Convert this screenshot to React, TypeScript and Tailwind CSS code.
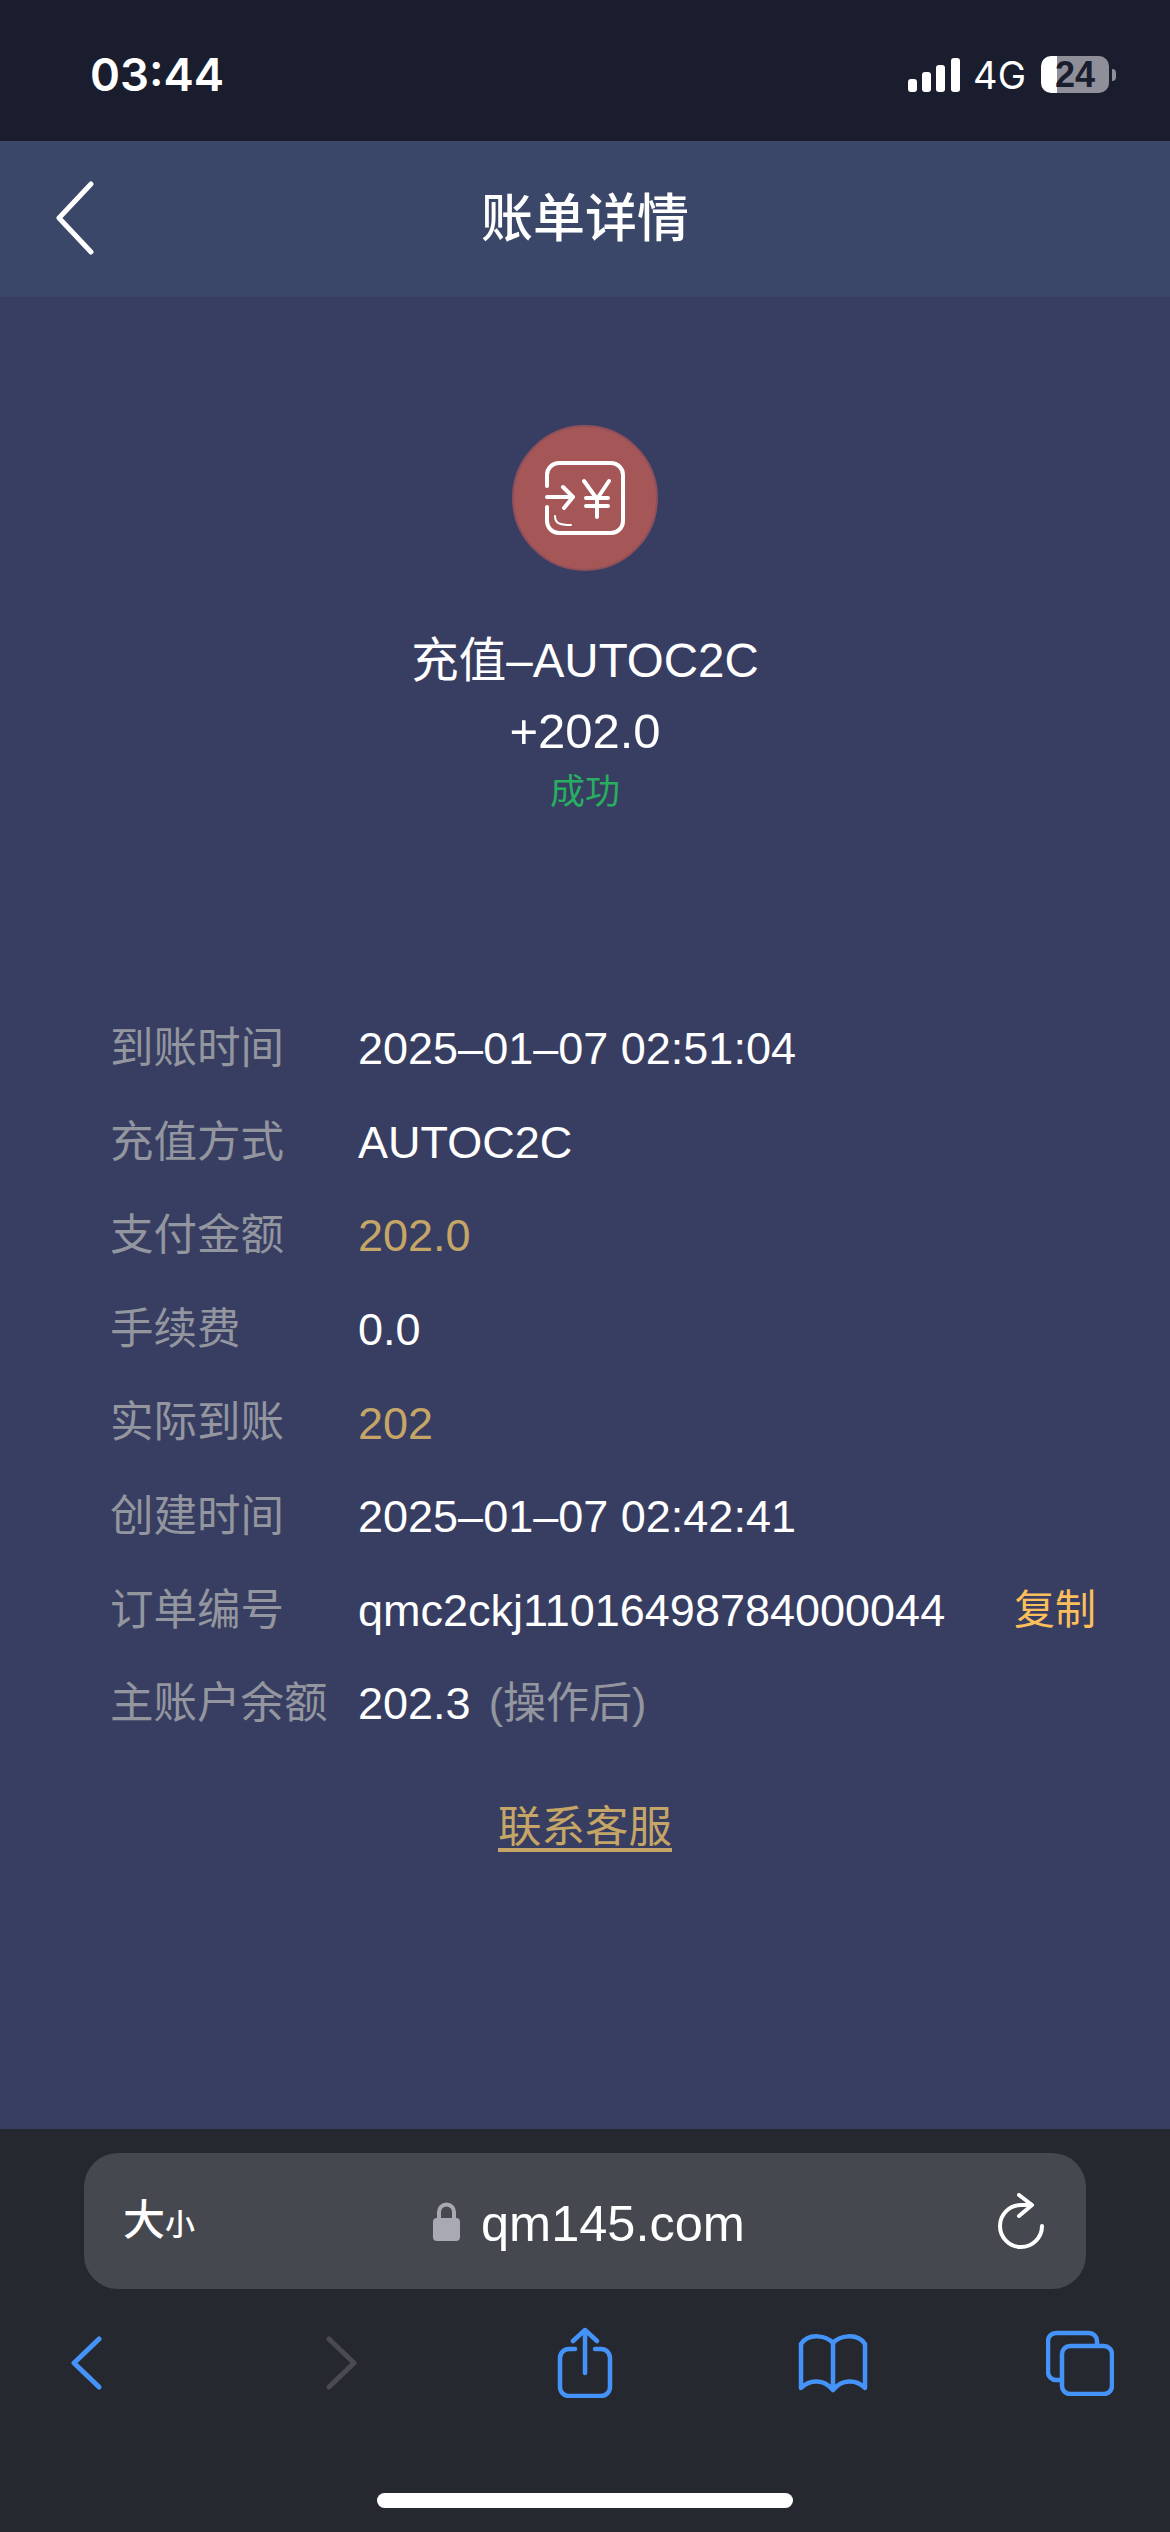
const fontStack = { fontFamily: '"Liberation Sans", "Noto Sans CJK SC", sans-serif' };

const rows = [
  { label: '到账时间', value: '2025–01–07 02:51:04' },
  { label: '充值方式', value: 'AUTOC2C' },
  { label: '支付金额', value: '202.0', gold: true },
  { label: '手续费', value: '0.0' },
  { label: '实际到账', value: '202', gold: true },
  { label: '创建时间', value: '2025–01–07 02:42:41' },
  { label: '订单编号', value: 'qmc2ckj11016498784000044', copy: true },
  { label: '主账户余额', value: '202.3', note: '(操作后)' },
];

function SignalBars() {
  return (
    <svg width="52" height="34" viewBox="0 0 52 34" fill="#fff">
      <rect x="0" y="21" width="9" height="13" rx="3" />
      <rect x="14" y="14" width="9" height="20" rx="3" />
      <rect x="28" y="7" width="9" height="27" rx="3" />
      <rect x="43" y="0" width="9" height="34" rx="3" />
    </svg>
  );
}

function RechargeIcon() {
  return (
    <svg width="80" height="74" viewBox="0 0 80 74" fill="none" stroke="#fff" strokeWidth="4" strokeLinecap="round" strokeLinejoin="round">
      <path d="M2 25V14A12 12 0 0 1 14 2H66A12 12 0 0 1 78 14V60A12 12 0 0 1 66 72H14A12 12 0 0 1 2 60V46" />
      <path d="M2 36H27M18 26L28 36L19 47" />
      <path d="M10 55C10 62 14 64 26 64" strokeWidth="2" />
      <path d="M39 20L52 38L64 20M52 38V56M41 37H63M41 45H63" />
    </svg>
  );
}

export default function App() {
  return (
    <div className="flex h-[2532px] w-[1170px] flex-col overflow-hidden bg-[#383e62] text-white" style={fontStack}>
      {/* Status bar */}
      <div className="flex h-[141px] shrink-0 items-center bg-[#191d2e] pl-[90px] pr-[54px] pt-[8px]">
        <span className="text-[45.5px] font-semibold leading-none" style={{ fontFamily: 'Inter, sans-serif' }}>03:44</span>
        <div className="ml-auto flex items-center">
          <SignalBars />
          <span className="ml-[13px] text-[38px] leading-none" style={{ fontFamily: 'Inter, sans-serif' }}>4G</span>
          <div className="ml-[15px] flex h-[37px] w-[68px] items-center justify-center rounded-[10px] bg-[linear-gradient(90deg,#fff_24%,#8e8f99_24%)] text-[36px] font-bold leading-none text-[#191d2e]">
            24
          </div>
          <div className="ml-[3px] h-[12px] w-[4px] rounded-r-full bg-[#8e8f99]" />
        </div>
      </div>

      {/* Header */}
      <div className="relative flex h-[156px] shrink-0 items-center justify-center bg-[#3b4769]">
        <svg className="absolute left-[55px] top-[40px]" width="40" height="74" viewBox="0 0 40 74" fill="none" stroke="#fff" strokeWidth="5" strokeLinecap="round" strokeLinejoin="round">
          <path d="M36 3L4 37L36 71" />
        </svg>
        <h1 className="text-[52px] font-medium leading-none">账单详情</h1>
      </div>

      {/* Content */}
      <main className="flex min-h-0 flex-1 flex-col items-center">
        <div className="mt-[128px] flex h-[146px] w-[146px] items-center justify-center rounded-full border-2 border-[#8e4f5c] bg-[#a55656]">
          <RechargeIcon />
        </div>
        <p className="mt-[55px] text-[47.5px] leading-[70px]">充值–AUTOC2C</p>
        <p className="text-[49px] leading-[71px]">+202.0</p>
        <p className="text-[35px] leading-[50px] text-[#27ae60]">成功</p>

        <div className="mt-[185px] flex w-full flex-col pl-[110px] pr-[74px]">
          {rows.map((row) => (
            <div key={row.label} className="flex h-[93.6px] items-center text-[45px] leading-none">
              <span className="w-[248px] shrink-0 text-[43.5px] text-[#93969f]">{row.label}</span>
              <span className={row.gold ? 'text-[#c6a666]' : 'text-white'}>{row.value}</span>
              {row.note && <span className="ml-[18px] text-[43px] text-[#93969f]">{row.note}</span>}
              {row.copy && <span className="ml-auto text-[41px] text-[#fdbe5c]">复制</span>}
            </div>
          ))}
        </div>

        <a className="mt-[46px] text-[43.5px] leading-[60px] text-[#c6a666] underline underline-offset-[6px]">联系客服</a>
      </main>

      {/* Safari toolbar */}
      <div className="flex h-[403px] shrink-0 flex-col bg-[#26282f]">
        <div className="mx-[84px] mt-[24px] flex h-[136px] items-center rounded-[34px] bg-[#46484f] pl-[39px] pr-[42px]">
          <span className="flex w-[310px] items-baseline font-medium leading-none">
            <span className="text-[42px]">大</span>
            <span className="text-[30px]">小</span>
          </span>
          <svg width="27" height="39" viewBox="0 0 27 39" fill="none">
            <path d="M6 18V10A7.5 7.5 0 0 1 21 10V18" stroke="#a9a9b3" strokeWidth="4" />
            <rect x="0" y="16" width="27" height="23" rx="4" fill="#a9a9b3" />
          </svg>
          <span className="ml-[21px] pt-[6px] text-[50.5px] leading-none">qm145.com</span>
          <svg className="ml-auto" width="46" height="56" viewBox="0 0 46 56" fill="none" stroke="#fff" strokeWidth="4" strokeLinecap="round" strokeLinejoin="round">
            <path d="M33 12H23A21 21 0 1 0 44 33" />
            <path d="M21 2L34 12L21 23" />
          </svg>
        </div>

        <div className="mt-[38px] flex items-center pl-[71px]">
          <svg width="31" height="54" viewBox="0 0 31 54" fill="none" stroke="#4493f8" strokeWidth="5" strokeLinecap="round" strokeLinejoin="round">
            <path d="M28 3L3 27L28 51" />
          </svg>
          <svg className="ml-[224px]" width="31" height="54" viewBox="0 0 31 54" fill="none" stroke="#4a4b50" strokeWidth="5" strokeLinecap="round" strokeLinejoin="round">
            <path d="M3 3L28 27L3 51" />
          </svg>
          <svg className="ml-[200px]" width="56" height="71" viewBox="0 0 56 71" fill="none" stroke="#4493f8" strokeWidth="4.5" strokeLinecap="round" strokeLinejoin="round">
            <path d="M28 3V46M16 14L28 3L40 14" />
            <path d="M18 22H12A9 9 0 0 0 3 31V60A9 9 0 0 0 12 69H44A9 9 0 0 0 53 60V31A9 9 0 0 0 44 22H38" />
          </svg>
          <svg className="ml-[185px]" width="70" height="60" viewBox="0 0 70 60" fill="none" stroke="#4493f8" strokeWidth="4.5" strokeLinecap="round" strokeLinejoin="round">
            <path d="M35 10C29 3 11 -1 3 11V55C12 46 26 46 35 57C44 46 58 46 67 55V11C59 -1 41 3 35 10V57" />
          </svg>
          <svg className="ml-[178px]" width="68" height="66" viewBox="0 0 68 66" fill="none" stroke="#4493f8" strokeWidth="4.5" strokeLinecap="round" strokeLinejoin="round">
            <path d="M51 15V11A8 8 0 0 0 43 3H10A8 8 0 0 0 2 11V42A8 8 0 0 0 10 50H16" />
            <rect x="16" y="16" width="50" height="48" rx="8" />
          </svg>
        </div>

        <div className="mx-auto mt-[95px] h-[15px] w-[416px] rounded-full bg-white" />
      </div>
    </div>
  );
}
